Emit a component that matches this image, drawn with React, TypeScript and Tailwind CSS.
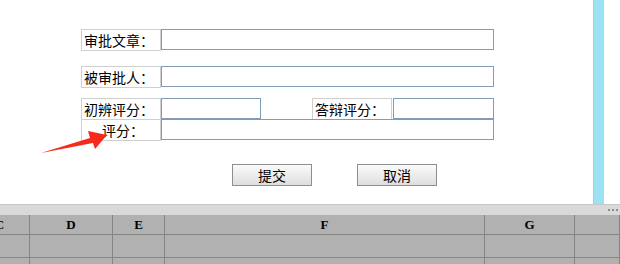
import React from 'react';

const font = { fontFamily: '"Noto Sans CJK SC", "DejaVu Sans", sans-serif' };

const Label = ({ text, pad = 'pl-[2px]' }: { text: string; pad?: string }) => (
  <div className={`w-[80px] h-[22px] border border-[#cfcfcf] flex items-center ${pad} text-[14px] leading-none text-black`}>
    {text}
  </div>
);

const Field = ({ w }: { w: string }) => <div className={`${w} h-[21px] border border-[#7f9db9] bg-white`} />;

const Btn = ({ text }: { text: string }) => (
  <button className="w-[80px] h-[22px] border border-[#8e8e8e] bg-gradient-to-b from-[#fbfbfb] to-[#dedede] text-[14px] leading-none text-black flex items-center justify-center">
    {text}
  </button>
);

const cols = ['C', 'D', 'E', 'F', 'G', ''];
const widths = 'grid-cols-[30px_83px_52px_320px_90px_1fr]';

export default function App() {
  return (
    <div className="relative w-[620px] h-[264px] overflow-hidden bg-white" style={font}>
      <div className="flex h-[204px]">
        <div className="w-[593px] pl-[81px] pt-[29px] flex flex-col">
          <div className="flex">
            <Label text="审批文章：" />
            <Field w="w-[333px]" />
          </div>
          <div className="flex mt-[15px]">
            <Label text="被审批人：" />
            <Field w="w-[333px]" />
          </div>
          <div className="flex mt-[10px]">
            <Label text="初辨评分：" />
            <Field w="w-[100px]" />
            <div className="ml-[51px]"><Label text="答辩评分：" /></div>
            <div className="ml-[1px]"><Field w="w-[101px]" /></div>
          </div>
          <div className="flex -mt-[1px]">
            <Label text="评分：" pad="pl-[20px]" />
            <Field w="w-[333px]" />
          </div>
          <div className="flex gap-[45px] mt-[23px] ml-[151px]">
            <Btn text="提交" />
            <Btn text="取消" />
          </div>
        </div>
        <div className="w-[1px] bg-[#c4c4c4]" />
        <div className="w-[10px] bg-[#9be2f3]" />
        <div className="flex-1" />
      </div>

      <div className="h-[11px] bg-[#d9d9d9] border-t border-[#c8c8c8] flex justify-end items-center pr-[2px] gap-[2px]">
        <span className="w-[2px] h-[2px] bg-[#8c8c8c]" />
        <span className="w-[2px] h-[2px] bg-[#8c8c8c]" />
        <span className="w-[2px] h-[2px] bg-[#8c8c8c]" />
      </div>

      <div className="bg-[#b1b1b1]" style={{ fontFamily: '"Liberation Serif", serif' }}>
        <div className={`grid ${widths} h-[20px] border-b border-[#858585]`}>
          {cols.map((c, i) => (
            <div key={i} className="border-r border-[#858585] flex items-center justify-center text-[13px] text-black font-semibold">
              {i === 0 ? <span className="-ml-[30px]">{c}</span> : c}
            </div>
          ))}
        </div>
        <div className={`grid ${widths} h-[23px] border-b border-[#858585]`}>
          {cols.map((_, i) => (
            <div key={i} className="border-r border-[#858585]" />
          ))}
        </div>
        <div className={`grid ${widths} h-[10px]`}>
          {cols.map((_, i) => (
            <div key={i} className="border-r border-[#858585]" />
          ))}
        </div>
      </div>

      <svg className="absolute left-0 top-0 pointer-events-none" width="620" height="264">
        <polygon points="107,135 88,131 90,138 41,153 93,143 95,149" fill="#f52a1c" />
      </svg>
    </div>
  );
}
